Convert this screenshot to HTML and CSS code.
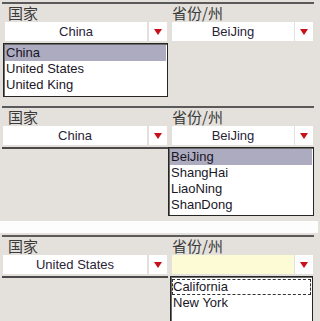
FILE: index.html
```html
<!DOCTYPE html>
<html>
<head>
<meta charset="utf-8">
<link rel="stylesheet" href="styles.css">
</head>
<body>
<div class="shot shot1">
  <div class="panel">
    <div class="col col-country">
      <div class="label">国家</div>
      <div class="select">
        <div class="field">China</div>
        <div class="arrow"><span class="tri"></span></div>
      </div>
      <div class="listbox lb1">
        <div class="opt sel">China</div>
        <div class="opt">United States</div>
        <div class="opt">United King</div>
      </div>
    </div>
    <div class="col col-prov">
      <div class="label">省份/州</div>
      <div class="select">
        <div class="field">BeiJing</div>
        <div class="arrow"><span class="tri"></span></div>
      </div>
    </div>
  </div>
</div>
<div class="shot shot2">
  <div class="panel">
    <div class="col col-country">
      <div class="label">国家</div>
      <div class="select">
        <div class="field">China</div>
        <div class="arrow"><span class="tri"></span></div>
      </div>
      <div class="underline"></div>
    </div>
    <div class="col col-prov">
      <div class="label">省份/州</div>
      <div class="select">
        <div class="field">BeiJing</div>
        <div class="arrow"><span class="tri"></span></div>
      </div>
      <div class="listbox lb2">
        <div class="opt sel">BeiJing</div>
        <div class="opt">ShangHai</div>
        <div class="opt">LiaoNing</div>
        <div class="opt">ShanDong</div>
      </div>
    </div>
  </div>
</div>
<div class="gap"></div>
<div class="shot shot3">
  <div class="panel">
    <div class="col col-country">
      <div class="label">国家</div>
      <div class="select">
        <div class="field">United States</div>
        <div class="arrow"><span class="tri"></span></div>
      </div>
      <div class="underline"></div>
    </div>
    <div class="col col-prov">
      <div class="label">省份/州</div>
      <div class="select">
        <div class="field empty"></div>
        <div class="arrow"><span class="tri"></span></div>
      </div>
      <div class="listbox lb3">
        <div class="opt focus">California</div>
        <div class="opt">New York</div>
      </div>
    </div>
  </div>
</div>
</body>
</html>
```

FILE: styles.css
```css
html, body {
  margin: 0;
  padding: 0;
  background: #e4e1dc;
  width: 318px;
  height: 321px;
  overflow: hidden;
  font-family: "Liberation Sans", Arial, sans-serif;
  font-size: 13px;
  color: #222;
}
.shot {
  background: #e4e1dc;
  padding-left: 2px;
  padding-right: 4px;
}
.shot1 { padding-top: 2px; height: 104px; }
.shot2 { height: 115px; }
.gap { height: 12px; background: #fdfdfd; }
.shot3 { padding-top: 2px; height: 90px; }
.panel {
  display: flex;
  border-top: 2px solid #5a5a5a;
}
.col-country { width: 166px; }
.col-prov { width: 146px; }
.label {
  height: 17px;
  line-height: 17px;
  font-family: "Noto Sans CJK SC", sans-serif;
  font-size: 15px;
  font-weight: 400;
  color: #3a3a3a;
}
.col-country .label { padding-left: 6px; }
.col-prov .label { padding-left: 4px; }
.select {
  display: flex;
  height: 19px;
  margin-top: 1px;
  margin-bottom: 2px;
  gap: 2px;
}
.col-country .select { padding-left: 3px; padding-right: 1px; }
.col-prov .select { padding-left: 4px; padding-right: 1px; gap: 1px; }
.shot2 .col-country .select, .shot3 .col-country .select { padding-left: 1px; }
.field {
  flex: 1;
  background: #fff;
  text-align: center;
  line-height: 19px;
  color: #2a2438;
}
.field.empty { background: #fcfbd6; }
.arrow {
  width: 18px;
  background: #fff;
  display: flex;
  align-items: center;
  justify-content: center;
}
.tri {
  width: 0;
  height: 0;
  border-left: 4px solid transparent;
  border-right: 4px solid transparent;
  border-top: 6px solid #c8101a;
}
.underline {
  height: 2px;
  background: #4a4a4a;
}
.listbox {
  background: #fff;
  border: 1px solid #262626;
  box-shadow: inset 1px 1px 0 #6a6a6a;
  padding: 1px 1px 0 1px;
  overflow: hidden;
  box-sizing: border-box;
}
.lb1 { margin-left: 1px; height: 54px; }
.lb2 { height: 69px; }
.lb3 { margin-left: 2px; margin-right: 1px; height: 60px; padding-top: 2px; }
.opt {
  height: 16px;
  line-height: 16px;
  padding-left: 1px;
  color: #1a1626;
  white-space: nowrap;
}
.opt.sel { background: #adabc0; }
.opt.focus { outline: 1px dashed #333; outline-offset: -1px; }
```
